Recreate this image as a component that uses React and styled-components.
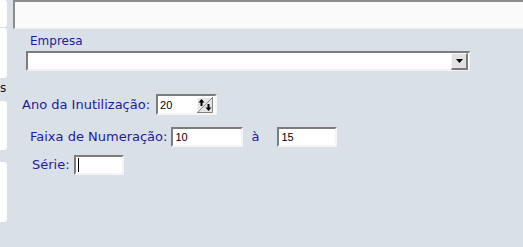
import React from 'react';
import styled, { createGlobalStyle } from 'styled-components';

const GlobalStyle = createGlobalStyle`
  html, body {
    margin: 0;
    padding: 0;
    background: #dae0e8;
  }
  body {
    font-family: "DejaVu Sans", Verdana, sans-serif;
  }
`;

const Page = styled.div`
  display: flex;
  width: 523px;
  height: 247px;
  overflow: hidden;
  background: #dae0e8;
`;

const Sidebar = styled.div`
  display: flex;
  flex-direction: column;
  width: 8px;
  flex: none;
`;

const SideTab = styled.div`
  width: 7px;
  height: ${(p) => p.h}px;
  margin-top: ${(p) => p.top}px;
  background: #ffffff;
  border-radius: 0 3px 3px 0;
`;

const SideText = styled.div`
  margin-top: 4px;
  height: 12px;
  font-size: 12px;
  line-height: 12px;
  color: #111;
  overflow: hidden;
`;

const Main = styled.div`
  flex: 1;
  margin-left: 5px;
  display: flex;
  flex-direction: column;
`;

const TopBar = styled.div`
  height: 26px;
  margin-right: -4px;
  background: #fafafa;
  border-top: 2px solid #8c8c8c;
  border-left: 2px solid #8c8c8c;
  border-bottom: 1px solid #eeeeee;
`;

const Section = styled.div`
  display: flex;
  flex-direction: column;
  margin-top: 5px;
`;

const Label = styled.label`
  font-size: ${(p) => p.size || 13}px;
  line-height: 16px;
  color: #1c1c9a;
  white-space: nowrap;
`;

const TopLabel = styled(Label)`
  margin-left: 17px;
  line-height: 15px;
`;

const Select = styled.div`
  display: flex;
  justify-content: flex-end;
  align-items: flex-start;
  box-sizing: border-box;
  width: 444px;
  height: 20px;
  margin: 2px 0 0 13px;
  padding-right: 1px;
  background: #ffffff;
  border-top: 2px solid #7c7c7c;
  border-left: 2px solid #7c7c7c;
  border-bottom: 2px solid #f2f2f2;
  border-right: 1px solid #f2f2f2;
`;

const DropButton = styled.div`
  display: flex;
  align-items: center;
  justify-content: center;
  box-sizing: border-box;
  width: 17px;
  height: 17px;
  background: #e2e2e2;
  border-top: 1px solid #f8f8f8;
  border-left: 1px solid #f8f8f8;
  border-right: 2px solid #7a7a7a;
  border-bottom: 2px solid #7a7a7a;
`;

const Row = styled.div`
  display: flex;
  align-items: center;
  gap: ${(p) => p.gap || 4}px;
  margin-left: ${(p) => p.indent}px;
  margin-top: ${(p) => p.top}px;
`;

const TextBox = styled.div`
  display: flex;
  align-items: center;
  box-sizing: border-box;
  width: ${(p) => p.w}px;
  height: ${(p) => p.h || 20}px;
  padding: 0 2px 0 2px;
  background: #ffffff;
  border-top: 2px solid #7c7c7c;
  border-left: 2px solid #7c7c7c;
  border-bottom: 2px solid #f4f4f4;
  border-right: 2px solid #f4f4f4;
  font-family: "Liberation Sans", Arial, sans-serif;
  font-size: 11px;
  color: #000;
`;

const Value = styled.span`
  flex: 1;
  line-height: 14px;
`;

const Caret = styled.span`
  width: 1px;
  height: 14px;
  background: #000;
`;

const Sep = styled.span`
  margin: 0 14px 0 4px;
  font-size: 13px;
  line-height: 16px;
  color: #1c1c9a;
`;

const SpinBox = styled.svg`
  flex: none;
  display: block;
`;

function DropArrow() {
  return (
    <svg width="9" height="6" viewBox="0 0 9 6">
      <path d="M1 1 H8 L4.5 5 Z" fill="#000" />
    </svg>
  );
}

function Spinner() {
  return (
    <SpinBox width="16" height="16" viewBox="0 0 16 16">
      <rect x="0" y="0" width="16" height="16" fill="#e4e4e4" />
      <path d="M0 15.5 V0.5 H15.5" stroke="#ffffff" fill="none" />
      <path d="M0 15.5 H15.5 V0" stroke="#808080" fill="none" />
      <path d="M1 15 L15 1" stroke="#8a8a8a" />
      <path d="M4.5 2 L1.5 5.5 H7.5 Z" fill="#000" />
      <rect x="3.5" y="5" width="2" height="4" fill="#000" />
      <path d="M11.5 14 L8.5 10.5 H14.5 Z" fill="#000" />
      <rect x="10.5" y="7" width="2" height="4" fill="#000" />
    </SpinBox>
  );
}

export default function App() {
  return (
    <>
      <GlobalStyle />
      <Page>
        <Sidebar>
          <SideTab h={27} top={0} />
          <SideTab h={50} top={1} />
          <SideText>s</SideText>
          <SideTab h={49} top={7} />
          <SideTab h={60} top={12} />
        </Sidebar>
        <Main>
          <TopBar />
          <Section>
            <TopLabel size={12}>Empresa</TopLabel>
            <Select>
              <DropButton>
                <DropArrow />
              </DropButton>
            </Select>
          </Section>

          <Row indent={9} top={23} gap={6}>
            <Label>Ano da Inutilização:</Label>
            <TextBox w={61} h={21}>
              <Value>20</Value>
              <Spinner />
            </TextBox>
          </Row>

          <Row indent={17} top={12}>
            <Label>Faixa de Numeração:</Label>
            <TextBox w={72}>
              <Value>10</Value>
            </TextBox>
            <Sep>à</Sep>
            <TextBox w={60}>
              <Value>15</Value>
            </TextBox>
          </Row>

          <Row indent={19} top={8}>
            <Label>Série:</Label>
            <TextBox w={50}>
              <Caret />
            </TextBox>
          </Row>
        </Main>
      </Page>
    </>
  );
}
